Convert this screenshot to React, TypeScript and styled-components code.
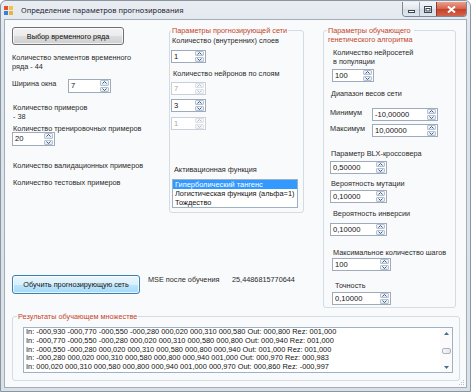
import React from 'react';
import styled, { createGlobalStyle } from 'styled-components';

const GlobalStyle = createGlobalStyle`
  html, body {
    margin: 0;
    padding: 0;
    background: #ffffff;
  }
  body {
    font-family: "Liberation Sans", Arial, sans-serif;
    font-size: 7.3px;
    color: #2a2a2a;
  }
`;

const CLIENT_BG = '#f9fafc';

const Window = styled.div`
    width: 471px;
    height: 392px;
    box-sizing: border-box;
    display: flex;
    flex-direction: column;
    border: 1px solid #8a95a2;
    border-radius: 6px 6px 0 0;
    background: linear-gradient(#e9edf2, #dde4eb 40px, #d9e0e8);
    overflow: hidden;
`;

const TitleBar = styled.div`
    height: 18px;
    display: flex;
    align-items: center;
    flex-shrink: 0;
`;

const AppIcon = styled.svg`
    margin-left: 3px;
    flex-shrink: 0;
`;

const Title = styled.div`
    margin-left: 8px;
    font-family: "Noto Sans", "Open Sans", sans-serif;
    font-size: 7.5px;
    color: #1c2430;
`;

const CaptionButtons = styled.div`
    margin-left: auto;
    margin-right: 3px;
    align-self: flex-start;
    margin-top: 1px;
    display: flex;
    height: 14px;
    border: 1px solid #7d8896;
    border-top: none;
    border-radius: 0 0 4px 4px;
    overflow: hidden;
`;

const CaptionButton = styled.div<{ $w: number; $close?: boolean }>`
    width: ${p => p.$w}px;
    display: flex;
    align-items: center;
    justify-content: center;
    border-left: ${p => (p.$close ? '1px solid #8d3b2c' : '1px solid #9aa5b2')};
    background: ${p =>
        p.$close
            ? 'linear-gradient(#e9a08e, #d7604a 50%, #c4402a 51%, #d2634b)'
            : 'linear-gradient(#f3f5f8, #e3e8ee 50%, #d5dce4 51%, #dfe5ec)'};
    &:first-child {
        border-left: none;
    }
`;

const Client = styled.div`
    flex: 1;
    margin: 0 3px 3px 3px;
    border: 1px solid #a3adb8;
    background: ${CLIENT_BG};
    padding: 7px 0 0 7px;
    position: relative;
    display: flex;
    flex-direction: column;
`;

const TopSection = styled.div`
    display: flex;
    align-items: flex-start;
`;

const LeftArea = styled.div`
    width: 292px;
    display: flex;
    flex-direction: column;
`;

const UpperRow = styled.div`
    display: flex;
    align-items: flex-start;
`;

const LeftColumn = styled.div`
    width: 157px;
    display: flex;
    flex-direction: column;
    align-items: flex-start;
`;

const Group = styled.div<{ $w: number; $h: number; $mt?: number; $ml?: number }>`
    position: relative;
    box-sizing: border-box;
    width: ${p => p.$w}px;
    height: ${p => p.$h}px;
    margin-top: ${p => p.$mt ?? 0}px;
    margin-left: ${p => p.$ml ?? 0}px;
    border: 1px solid #d3dbe3;
    border-radius: 3px;
    display: flex;
    flex-direction: column;
    align-items: flex-start;
`;

const GroupCaption = styled.div<{ $left: number }>`
    position: absolute;
    top: -5px;
    left: ${p => p.$left}px;
    padding: 0 1px;
    background: ${CLIENT_BG};
    color: #c4462a;
    line-height: 9px;
    white-space: pre;
`;

const Label = styled.div<{ $mt?: number; $ml?: number; $w?: number }>`
    margin-top: ${p => p.$mt ?? 0}px;
    margin-left: ${p => p.$ml ?? 0}px;
    ${p => (p.$w ? `width: ${p.$w}px; flex-shrink: 0;` : '')}
    line-height: 9px;
    white-space: pre;
`;

const FieldRow = styled.div<{ $mt?: number; $ml?: number }>`
    display: flex;
    align-items: flex-start;
    margin-top: ${p => p.$mt ?? 0}px;
    margin-left: ${p => p.$ml ?? 0}px;
`;

const WinButton = styled.div<{ $w: number; $h: number; $default?: boolean }>`
    width: ${p => p.$w}px;
    height: ${p => p.$h}px;
    box-sizing: border-box;
    flex-shrink: 0;
    display: flex;
    align-items: center;
    justify-content: center;
    border-radius: 3px;
    border: 1px solid ${p => (p.$default ? '#3c7fb1' : '#707070')};
    background: ${p =>
        p.$default
            ? 'linear-gradient(#eaf6fd, #d9f0fc 50%, #bee6fd 51%, #a7d9f5)'
            : 'linear-gradient(#f2f2f2, #ebebeb 50%, #dddddd 51%, #cfcfcf)'};
    box-shadow: inset 0 0 0 1px rgba(255, 255, 255, 0.7);
    color: #111;
`;

const SpinFrame = styled.div<{ $w: number; $h: number; $mt?: number; $ml?: number; $off?: boolean }>`
    display: flex;
    flex-shrink: 0;
    box-sizing: border-box;
    width: ${p => p.$w}px;
    height: ${p => p.$h}px;
    margin-top: ${p => p.$mt ?? 0}px;
    margin-left: ${p => p.$ml ?? 0}px;
    border: 1px solid ${p => (p.$off ? '#c9d0d9' : '#9eabbb')};
    background: #ffffff;
`;

const SpinValue = styled.div<{ $off?: boolean }>`
    flex: 1;
    padding-left: 2px;
    font-size: 7.6px;
    line-height: 11px;
    color: ${p => (p.$off ? '#a8a8a8' : '#111')};
`;

const SpinButtons = styled.div`
    width: 9px;
    display: flex;
    flex-direction: column;
    gap: 1px;
    padding: 0 1px 0 0;
`;

const SpinArrow = styled.div<{ $off?: boolean }>`
    flex: 1;
    display: flex;
    align-items: center;
    justify-content: center;
    border: 1px solid ${p => (p.$off ? '#dde2e8' : '#b5c2d2')};
    border-radius: 1px;
    background: ${p => (p.$off ? '#f4f5f7' : 'linear-gradient(#f6f8fb, #dfe6ee)')};
`;

const ListBox = styled.div`
    width: 126px;
    height: 29px;
    box-sizing: border-box;
    margin-top: 5px;
    margin-left: 2px;
    border: 1px solid #9eb0c6;
    background: #ffffff;
`;

const ListItem = styled.div<{ $selected?: boolean }>`
    height: 9px;
    line-height: 9px;
    font-size: 7.4px;
    padding-left: 2px;
    white-space: nowrap;
    background: ${p => (p.$selected ? '#3399ff' : 'transparent')};
    color: ${p => (p.$selected ? '#ffffff' : '#111')};
`;

const TrainRow = styled.div`
    display: flex;
    align-items: flex-start;
    margin-top: 62px;
`;

const ResultsBox = styled.div`
    display: flex;
    box-sizing: border-box;
    width: 430px;
    height: 46px;
    margin-top: 10px;
    margin-left: 10px;
    border: 1px solid #9fb1c6;
    background: #ffffff;
`;

const ResultsText = styled.div`
    flex: 1;
    padding: 0 0 0 2px;
    font-size: 7.4px;
    line-height: 8.8px;
    white-space: pre;
    color: #111;
`;

const ScrollBar = styled.div`
    width: 12px;
    display: flex;
    flex-direction: column;
    align-items: center;
    justify-content: space-between;
    padding: 4px 0 3px;
    background: #fbfbfc;
`;

const ScrollThumb = styled.div`
    width: 9px;
    height: 6px;
    box-sizing: border-box;
    border: 1px solid #a9b3bf;
    border-radius: 2px;
    background: linear-gradient(90deg, #f5f6f8, #e3e7ec);
`;

const Grip = styled.svg`
    position: absolute;
    right: 1px;
    bottom: 1px;
`;

type SpinProps = {
    value: string;
    w: number;
    h?: number;
    mt?: number;
    ml?: number;
    off?: boolean;
};

const Chevron = ({ down, off }: { down?: boolean; off?: boolean }) => (
    <svg width="5" height="3" viewBox="0 0 5 3">
        <polyline
            points={down ? '0.5,0.5 2.5,2.5 4.5,0.5' : '0.5,2.5 2.5,0.5 4.5,2.5'}
            fill="none"
            stroke={off ? '#b8bec6' : '#3d5a80'}
            strokeWidth="1"
        />
    </svg>
);

const Spin = ({ value, w, h = 13, mt, ml, off }: SpinProps) => (
    <SpinFrame $w={w} $h={h} $mt={mt} $ml={ml} $off={off}>
        <SpinValue $off={off}>{value}</SpinValue>
        <SpinButtons>
            <SpinArrow $off={off}>
                <Chevron off={off} />
            </SpinArrow>
            <SpinArrow $off={off}>
                <Chevron down off={off} />
            </SpinArrow>
        </SpinButtons>
    </SpinFrame>
);

const results = [
    'In: -000,930 -000,770 -000,550 -000,280 000,020 000,310 000,580 Out: 000,800 Rez: 001,000',
    'In: -000,770 -000,550 -000,280 000,020 000,310 000,580 000,800 Out: 000,940 Rez: 001,000',
    'In: -000,550 -000,280 000,020 000,310 000,580 000,800 000,940 Out: 001,000 Rez: 001,000',
    'In: -000,280 000,020 000,310 000,580 000,800 000,940 001,000 Out: 000,970 Rez: 000,983',
    'In: 000,020 000,310 000,580 000,800 000,940 001,000 000,970 Out: 000,860 Rez: -000,997',
];

export default function App() {
    return (
        <>
            <GlobalStyle />
            <Window>
                <TitleBar>
                    <AppIcon width="9" height="9" viewBox="0 0 9 9">
                        <rect x="0" y="0" width="4" height="4" fill="#e2512b" />
                        <rect x="5" y="0" width="4" height="4" fill="#f5c343" />
                        <rect x="0" y="5" width="4" height="4" fill="#3b7fd6" />
                        <rect x="5" y="5" width="4" height="4" fill="#f0b23a" />
                    </AppIcon>
                    <Title>Определение параметров прогнозирования</Title>
                    <CaptionButtons>
                        <CaptionButton $w={16}>
                            <svg width="7" height="7" viewBox="0 0 7 7">
                                <rect x="0.5" y="4.5" width="6" height="2" fill="#fff" stroke="#3a4756" strokeWidth="1" />
                            </svg>
                        </CaptionButton>
                        <CaptionButton $w={16}>
                            <svg width="8" height="7" viewBox="0 0 8 7">
                                <rect x="0.5" y="0.5" width="7" height="6" fill="#fff" stroke="#3a4756" strokeWidth="1" />
                                <rect x="2" y="2.5" width="4" height="2.5" fill="none" stroke="#3a4756" strokeWidth="1" />
                            </svg>
                        </CaptionButton>
                        <CaptionButton $w={29} $close>
                            <svg width="9" height="7" viewBox="0 0 9 7">
                                <path d="M1 0.5 L8 6.5 M8 0.5 L1 6.5" stroke="#ffffff" strokeWidth="2" />
                            </svg>
                        </CaptionButton>
                    </CaptionButtons>
                </TitleBar>
                <Client>
                    <TopSection>
                        <LeftArea>
                            <UpperRow>
                                <LeftColumn>
                                    <WinButton $w={112} $h={18}>Выбор временного ряда</WinButton>
                                    <Label $mt={8}>{'Количество элементов временного\nряда - 44'}</Label>
                                    <FieldRow $mt={8}>
                                        <Label $w={56}>Ширина окна</Label>
                                        <Spin value="7" w={43} h={14} />
                                    </FieldRow>
                                    <Label $mt={10} $ml={1}>{'Количество примеров\n- 38'}</Label>
                                    <Label $mt={3} $ml={1}>Количество тренировочных примеров</Label>
                                    <Spin value="20" w={43} h={14} mt={-1} />
                                    <Label $mt={15} $ml={1}>Количество валидационных примеров</Label>
                                    <Label $mt={8} $ml={1}>Количество тестовых примеров</Label>
                                </LeftColumn>
                                <Group $w={135} $h={183} $mt={3}>
                                    <GroupCaption $left={1}>Параметры прогнозирующей сети</GroupCaption>
                                    <Label $mt={5} $ml={2}>Количество (внутренних) слоев</Label>
                                    <Spin value="1" w={35} mt={5} ml={1} />
                                    <Label $mt={6} $ml={3}>Количество нейронов по слоям</Label>
                                    <Spin value="7" w={35} mt={4} ml={1} off />
                                    <Spin value="3" w={35} mt={4} ml={1} />
                                    <Spin value="1" w={35} mt={5} ml={1} off />
                                    <Label $mt={35} $ml={4}>Активационная функция</Label>
                                    <ListBox>
                                        <ListItem $selected>Гиперболический тангенс</ListItem>
                                        <ListItem>Логистическая функция (альфа=1)</ListItem>
                                        <ListItem>Тождество</ListItem>
                                    </ListBox>
                                </Group>
                            </UpperRow>
                            <TrainRow>
                                <WinButton $w={128} $h={19} $default>Обучить прогнозирующую сеть</WinButton>
                                <Label $ml={8} $w={84}>MSE после обучения</Label>
                                <Label>25,4486815770644</Label>
                            </TrainRow>
                        </LeftArea>
                        <Group $w={133} $h={278} $mt={3} $ml={19}>
                            <GroupCaption $left={3}>{'Параметры обучающего\nгенетического алгоритма'}</GroupCaption>
                            <Label $mt={17} $ml={9}>{'Количество нейросетей\nв популяции'}</Label>
                            <Spin value="100" w={42} mt={3} ml={8} />
                            <Label $mt={7} $ml={7}>Диапазон весов сети</Label>
                            <FieldRow $mt={10} $ml={6}>
                                <Label $w={42}>Минимум</Label>
                                <Spin value="-10,00000" w={66} />
                            </FieldRow>
                            <FieldRow $mt={3} $ml={6}>
                                <Label $w={42}>Максимум</Label>
                                <Spin value="10,00000" w={66} />
                            </FieldRow>
                            <Label $mt={12} $ml={7}>Параметр BLX-кроссовера</Label>
                            <Spin value="0,50000" w={57} mt={3} ml={6} />
                            <Label $mt={5} $ml={7}>Вероятность мутации</Label>
                            <Spin value="0,10000" w={57} mt={2} ml={6} />
                            <Label $mt={6} $ml={9}>Вероятность инверсии</Label>
                            <Spin value="0,10000" w={57} mt={5} ml={6} />
                            <Label $mt={12} $ml={9}>Максимальное количество шагов</Label>
                            <Spin value="100" w={59} mt={1} ml={8} />
                            <Label $mt={10} $ml={11}>Точность</Label>
                            <Spin value="0,10000" w={59} mt={2} ml={8} />
                        </Group>
                    </TopSection>
                    <Group $w={448} $h={65} $mt={8}>
                        <GroupCaption $left={4}>Результаты обучающем множестве</GroupCaption>
                        <ResultsBox>
                            <ResultsText>{results.join('\n')}</ResultsText>
                            <ScrollBar>
                                <svg width="5" height="3" viewBox="0 0 5 3">
                                    <polygon points="0,3 2.5,0 5,3" fill="#4a6a8f" />
                                </svg>
                                <ScrollThumb />
                                <svg width="5" height="3" viewBox="0 0 5 3">
                                    <polygon points="0,0 2.5,3 5,0" fill="#4a6a8f" />
                                </svg>
                            </ScrollBar>
                        </ResultsBox>
                    </Group>
                    <Grip width="8" height="8" viewBox="0 0 8 8">
                        <g fill="#b9c2cc">
                            <rect x="6" y="2" width="1" height="1" />
                            <rect x="4" y="4" width="1" height="1" />
                            <rect x="6" y="4" width="1" height="1" />
                            <rect x="2" y="6" width="1" height="1" />
                            <rect x="4" y="6" width="1" height="1" />
                            <rect x="6" y="6" width="1" height="1" />
                        </g>
                    </Grip>
                </Client>
            </Window>
        </>
    );
}
